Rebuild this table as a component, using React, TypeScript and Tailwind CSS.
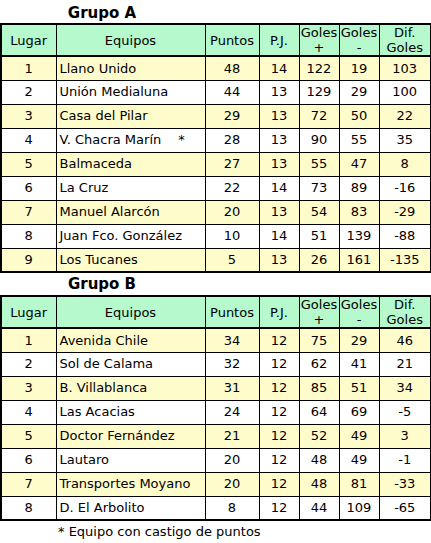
import React from 'react';

type Row = [number, string, number, number, number, number, number];

const grupoA: Row[] = [
  [1, 'Llano Unido', 48, 14, 122, 19, 103],
  [2, 'Unión Medialuna', 44, 13, 129, 29, 100],
  [3, 'Casa del Pilar', 29, 13, 72, 50, 22],
  [4, 'V. Chacra Marín', 28, 13, 90, 55, 35],
  [5, 'Balmaceda', 27, 13, 55, 47, 8],
  [6, 'La Cruz', 22, 14, 73, 89, -16],
  [7, 'Manuel Alarcón', 20, 13, 54, 83, -29],
  [8, 'Juan Fco. González', 10, 14, 51, 139, -88],
  [9, 'Los Tucanes', 5, 13, 26, 161, -135],
];

const grupoB: Row[] = [
  [1, 'Avenida Chile', 34, 12, 75, 29, 46],
  [2, 'Sol de Calama', 32, 12, 62, 41, 21],
  [3, 'B. Villablanca', 31, 12, 85, 51, 34],
  [4, 'Las Acacias', 24, 12, 64, 69, -5],
  [5, 'Doctor Fernández', 21, 12, 52, 49, 3],
  [6, 'Lautaro', 20, 12, 48, 49, -1],
  [7, 'Transportes Moyano', 20, 12, 48, 81, -33],
  [8, 'D. El Arbolito', 8, 12, 44, 109, -65],
];

// equipos con castigo de puntos
const castigo = ['V. Chacra Marín'];

const Tabla = ({ rows }: { rows: Row[] }) => (
  <table className="border-collapse table-fixed w-[430px] border-2 border-black">
    <colgroup>
      <col className="w-[55px]" />
      <col className="w-[149px]" />
      <col className="w-[54px]" />
      <col className="w-[40px]" />
      <col className="w-[40px]" />
      <col className="w-[40px]" />
      <col className="w-[52px]" />
    </colgroup>
    <thead>
      <tr className="bg-[#b5f9cc] h-[30px] border-b-2 border-black leading-[15px]">
        <th className="font-normal border-r border-black">Lugar</th>
        <th className="font-normal border-r border-black">Equipos</th>
        <th className="font-normal border-r border-black">Puntos</th>
        <th className="font-normal border-r border-black">P.J.</th>
        <th className="font-normal border-r border-black">Goles<br />+</th>
        <th className="font-normal border-r border-black">Goles<br />-</th>
        <th className="font-normal">Dif.<br />Goles</th>
      </tr>
    </thead>
    <tbody>
      {rows.map((r, i) => (
        <tr key={i} className={`h-[24px] border-b border-black ${i % 2 === 0 ? 'bg-[#fffccc]' : 'bg-white'}`}>
          <td className="text-center border-r border-black">{r[0]}</td>
          <td className="pl-[3px] border-r border-black whitespace-nowrap">
            {r[1]}
            {castigo.includes(r[1]) && <span className="ml-[17px]">*</span>}
          </td>
          <td className="text-center border-r border-black">{r[2]}</td>
          <td className="text-center border-r border-black">{r[3]}</td>
          <td className="text-center border-r border-black">{r[4]}</td>
          <td className="text-center border-r border-black">{r[5]}</td>
          <td className="text-center">{r[6]}</td>
        </tr>
      ))}
    </tbody>
  </table>
);

export default function App() {
  return (
    <div className="w-[431px] h-[543px] bg-white text-black text-[13px] font-['DejaVu_Sans',Verdana,sans-serif]">
      <div className="w-[204px] h-[23px] pt-[3px] text-center font-bold text-[15px] leading-[20px]">Grupo A</div>
      <Tabla rows={grupoA} />
      <div className="w-[204px] h-[22px] text-center font-bold text-[15px] leading-[22px]">Grupo B</div>
      <Tabla rows={grupoB} />
      <div className="pl-[58px] pt-[2px] leading-[18px]">* Equipo con castigo de puntos</div>
    </div>
  );
}
